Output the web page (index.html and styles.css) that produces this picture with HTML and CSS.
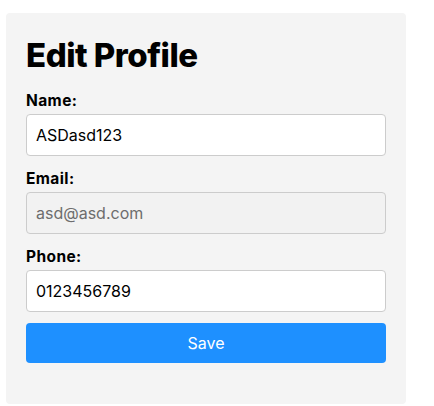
FILE: index.html
```html
<!DOCTYPE html>
<html>
<head>
<meta charset="utf-8">
<link rel="stylesheet" href="styles.css">
</head>
<body>
<div class="page">
  <form class="card">
    <h1 class="title">Edit Profile</h1>
    <div class="field">
      <label class="label">Name:</label>
      <input class="input" type="text" value="ASDasd123">
    </div>
    <div class="field">
      <label class="label">Email:</label>
      <input class="input input-disabled" type="text" value="asd@asd.com" disabled>
    </div>
    <div class="field">
      <label class="label">Phone:</label>
      <input class="input" type="text" value="0123456789">
    </div>
    <button class="save" type="button">Save</button>
  </form>
</div>
</body>
</html>
```
FILE: styles.css
```css
html, body {
  margin: 0;
  padding: 0;
  background: #ffffff;
}
body {
  font-family: Inter, "Noto Sans", sans-serif;
  color: #000;
}
.page {
  padding: 13px 6px;
}
.card {
  width: 400px;
  box-sizing: border-box;
  background: #f4f4f4;
  border-radius: 4px;
  padding: 20px 20px 41px;
  display: flex;
  flex-direction: column;
}
.title {
  margin: 2px 0 16px;
  font-size: 33px;
  line-height: 40px;
  font-weight: 800;
  letter-spacing: -0.5px;
}
.field {
  display: flex;
  flex-direction: column;
}
.label {
  font-size: 15.5px;
  font-weight: 700;
  line-height: 20px;
  letter-spacing: 0.4px;
  margin-bottom: 3px;
}
.input {
  box-sizing: border-box;
  width: 360px;
  height: 42px;
  padding: 0 9px;
  border: 1px solid #cccccc;
  border-radius: 4px;
  background: #ffffff;
  font-family: inherit;
  font-size: 16px;
  color: #000;
  margin-bottom: 13px;
}
.input-disabled {
  background: #f2f2f2;
  color: #6d6d6d;
  -webkit-text-fill-color: #6d6d6d;
  opacity: 1;
}
.field:last-of-type .input {
  margin-bottom: 11px;
}
.save {
  width: 360px;
  height: 40px;
  border: none;
  border-radius: 4px;
  background: #1e90ff;
  color: #ffffff;
  font-family: inherit;
  font-size: 16px;
}
```
